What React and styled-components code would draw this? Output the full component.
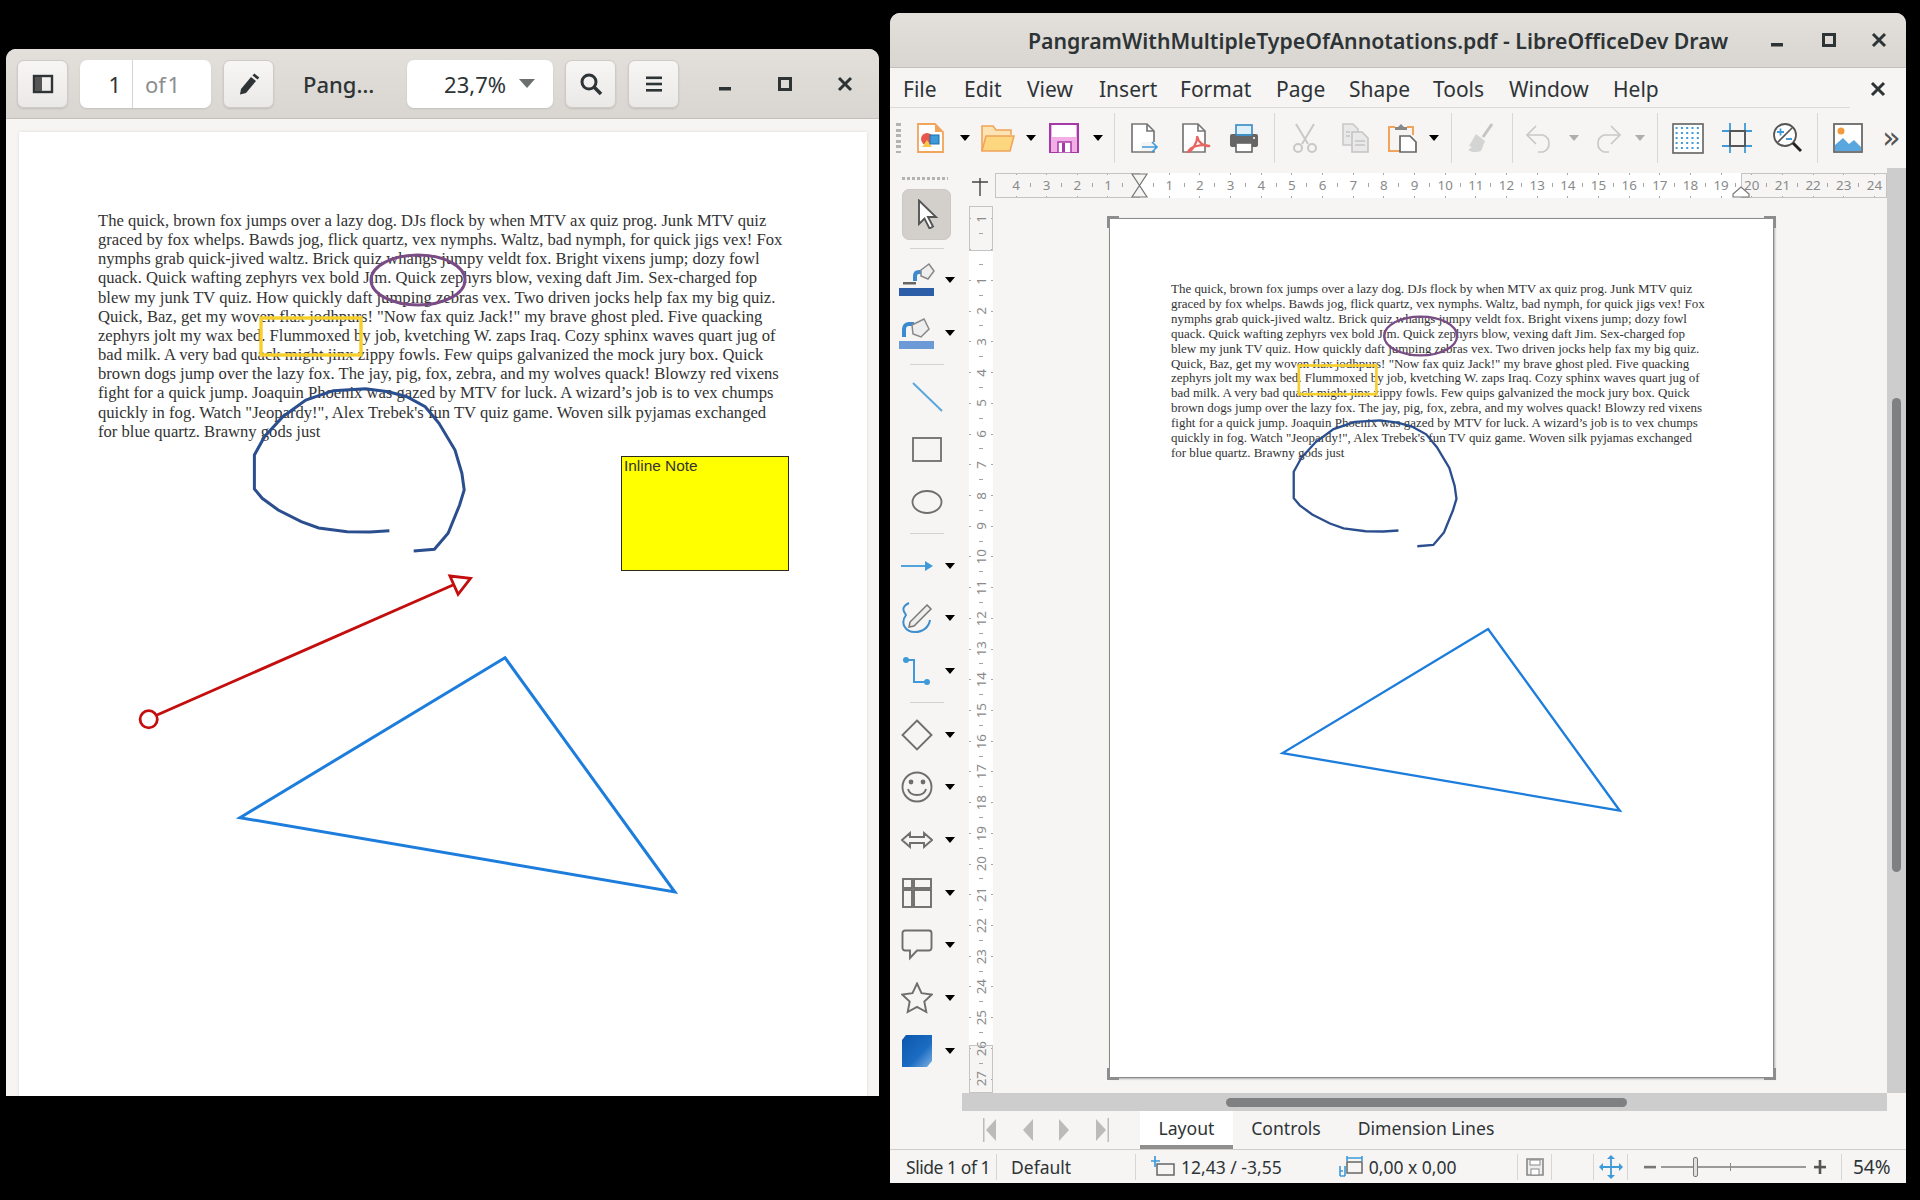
import React from "react";
import styled, { createGlobalStyle } from "styled-components";

const Global = createGlobalStyle`
  html, body { margin: 0; padding: 0; background: #000; }
  * { box-sizing: border-box; }
`;

const Desktop = styled.div`
  position: relative;
  width: 1920px;
  height: 1200px;
  background: #000;
  overflow: hidden;
  font-family: "Noto Sans", "Open Sans", sans-serif;
  color: #2e3436;
`;

/* ---------- shared window chrome ---------- */
const WindowShell = styled.section`
  position: absolute;
  display: flex;
  flex-direction: column;
  background: #f6f5f4;
  border-radius: 10px 10px 0 0;
  overflow: hidden;
`;
const PdfWindow = styled(WindowShell)`
  left: 6px;
  top: 49px;
  width: 873px;
  height: 1047px;
`;
const DrawWindow = styled(WindowShell)`
  left: 890px;
  top: 13px;
  width: 1016px;
  height: 1170px;
`;
const WinControls = styled.div`
  display: flex;
  align-items: center;
  color: #2e3436;
`;
const WinControl = styled.span`
  display: flex;
  justify-content: center;
  align-items: center;
  width: ${(p) => p.$w}px;
`;

const MinIcon = () => (
  <svg width="16" height="16" viewBox="0 0 16 16"><rect x="2" y="11" width="12" height="3.5" fill="#2e3436" /></svg>
);
const MaxIcon = () => (
  <svg width="16" height="16" viewBox="0 0 16 16"><rect x="2.5" y="2.5" width="11" height="11" fill="none" stroke="#2e3436" strokeWidth="3" /></svg>
);
const CloseIcon = () => (
  <svg width="16" height="16" viewBox="0 0 16 16"><path d="M2 2l12 12M14 2L2 14" stroke="#2e3436" strokeWidth="3" /></svg>
);

/* ---------- PDF viewer ---------- */
const PdfHeader = styled.header`
  height: 70px;
  flex: none;
  display: flex;
  align-items: center;
  padding: 0 0 0 11px;
  background: linear-gradient(#e3e0dc, #d9d6d1);
  border-bottom: 1px solid #c4bfba;
`;
const HeaderButton = styled.button`
  width: ${(p) => p.$w || 51}px;
  height: 48px;
  margin-left: ${(p) => p.$ml || 0}px;
  padding: 0;
  display: flex;
  align-items: center;
  justify-content: center;
  border: 1px solid #cfcac5;
  border-radius: 7px;
  background: linear-gradient(#f7f6f5, #ebe9e7);
  box-shadow: 0 1px 2px rgba(0, 0, 0, 0.12);
`;
const PageEntry = styled.div`
  width: 131px;
  height: 48px;
  margin-left: 12px;
  display: flex;
  border-radius: 7px;
  background: #fff;
  font-size: 22px;
  line-height: 48px;
  box-shadow: 0 1px 2px rgba(0, 0, 0, 0.1);
`;
const PageNumber = styled.span`
  width: 53px;
  padding-right: 11px;
  text-align: right;
  border-right: 1px solid #d8d4d0;
`;
const PageTotal = styled.span`
  padding-left: 12px;
  color: #8b8e8f;
  word-spacing: -4px;
`;
const DocTitle = styled.span`
  width: 133px;
  padding-left: 29px;
  font-size: 22px;
  font-weight: 500;
`;
const ZoomEntry = styled.div`
  width: 146px;
  height: 48px;
  display: flex;
  align-items: center;
  justify-content: flex-end;
  gap: 13px;
  padding-right: 18px;
  border-radius: 7px;
  background: #fff;
  font-size: 22px;
  box-shadow: 0 1px 2px rgba(0, 0, 0, 0.1);
`;
const ZoomCaret = styled.i`
  width: 0;
  height: 0;
  border-left: 8px solid transparent;
  border-right: 8px solid transparent;
  border-top: 9px solid #6b6f70;
`;
const PdfControls = styled(WinControls)`
  margin-left: 16px;
`;
const PdfBody = styled.div`
  flex: 1;
  display: flex;
  padding: 13px 12px 0 13px;
  background: #f6f5f4;
`;

const PageSheet = styled.article`
  position: relative;
  background: #fff;
  font-family: "Liberation Serif", serif;
  color: #333;
  white-space: nowrap;
`;
const PdfPage = styled(PageSheet)`
  flex: 1;
  padding: 79px 0 0 79px;
  font-size: 16.62px;
  line-height: 19.15px;
  box-shadow: 0 0 3px rgba(0, 0, 0, 0.12);
`;
const DrawPage = styled(PageSheet)`
  width: 665px;
  height: 860px;
  padding: 63px 0 0 61px;
  font-size: 12.96px;
  line-height: 14.9px;
  border: 1px solid #8a8a8a;
  box-shadow: 1px 1px 2px rgba(0, 0, 0, 0.3);
  &::after {
    content: "";
    position: absolute;
    inset: -3px;
    pointer-events: none;
    background:
      linear-gradient(#8d8d8d, #8d8d8d) 0 0 / 12px 3px no-repeat,
      linear-gradient(#8d8d8d, #8d8d8d) 0 0 / 3px 12px no-repeat,
      linear-gradient(#8d8d8d, #8d8d8d) 100% 0 / 12px 3px no-repeat,
      linear-gradient(#8d8d8d, #8d8d8d) 100% 0 / 3px 12px no-repeat,
      linear-gradient(#8d8d8d, #8d8d8d) 0 100% / 12px 3px no-repeat,
      linear-gradient(#8d8d8d, #8d8d8d) 0 100% / 3px 12px no-repeat,
      linear-gradient(#8d8d8d, #8d8d8d) 100% 100% / 12px 3px no-repeat,
      linear-gradient(#8d8d8d, #8d8d8d) 100% 100% / 3px 12px no-repeat;
  }
`;
const TextLine = styled.div``;
const Overlay = styled.svg`
  position: absolute;
  left: 0;
  top: 0;
  width: 100%;
  height: 100%;
  pointer-events: none;
`;
const InlineNote = styled.div`
  position: absolute;
  left: 602px;
  top: 324px;
  width: 168px;
  height: 115px;
  padding: 0 0 0 2px;
  background: #ffff00;
  border: 1px solid #2b2b1a;
  font-family: "Liberation Sans", sans-serif;
  font-size: 15.4px;
  line-height: 18px;
  color: #333;
`;

const LINES = [
  "The quick, brown fox jumps over a lazy dog. DJs flock by when MTV ax quiz prog. Junk MTV quiz",
  "graced by fox whelps. Bawds jog, flick quartz, vex nymphs. Waltz, bad nymph, for quick jigs vex! Fox",
  "nymphs grab quick-jived waltz. Brick quiz whangs jumpy veldt fox. Bright vixens jump; dozy fowl",
  "quack. Quick wafting zephyrs vex bold Jim. Quick zephyrs blow, vexing daft Jim. Sex-charged fop",
  "blew my junk TV quiz. How quickly daft jumping zebras vex. Two driven jocks help fax my big quiz.",
  'Quick, Baz, get my woven flax jodhpurs! "Now fax quiz Jack!" my brave ghost pled. Five quacking',
  "zephyrs jolt my wax bed. Flummoxed by job, kvetching W. zaps Iraq. Cozy sphinx waves quart jug of",
  "bad milk. A very bad quack might jinx zippy fowls. Few quips galvanized the mock jury box. Quick",
  "brown dogs jump over the lazy fox. The jay, pig, fox, zebra, and my wolves quack! Blowzy red vixens",
  "fight for a quick jump. Joaquin Phoenix was gazed by MTV for luck. A wizard’s job is to vex chumps",
  'quickly in fog. Watch "Jeopardy!", Alex Trebek\'s fun TV quiz game. Woven silk pyjamas exchanged',
  "for blue quartz. Brawny gods just",
];

const INK =
  "389.4,530.7 370,532 347.1,531.7 318.7,528 301.2,521.7 278.2,510 262.2,498.3 254.4,489 254.4,455 264.5,436.7 282.8,416.7 305.8,400 333.3,390.7 365.5,388.7 388.4,391.7 406.8,396.7 425.2,406.7 439,423.3 455,450 461.9,473.3 464.2,490 459.6,505 448.1,533.3 434.4,549.3 413.7,551";

const SharedMarks = () => (
  <g fill="none" strokeWidth="3">
    <ellipse cx="418" cy="280" rx="47" ry="25" stroke="#7a4c86" />
    <rect x="261" y="318" width="100" height="37" stroke="#f7cf2a" strokeWidth="3.4" />
    <polyline points={INK} stroke="#2b4f8e" />
    <polygon points="505,657.7 240,817.7 674.8,892" stroke="#1c7ddc" />
  </g>
);

/* ---------- header icons ---------- */
const SidebarIcon = () => (
  <svg width="22" height="22" viewBox="0 0 22 22">
    <rect x="2" y="3" width="18" height="16" fill="none" stroke="#2e3436" strokeWidth="2.4" />
    <rect x="3" y="4" width="7" height="14" fill="#555" />
  </svg>
);
const PenIcon = () => (
  <svg width="22" height="24" viewBox="0 0 22 24">
    <path d="M3 17L13 5l5 4L8 21l-6 1.5z" fill="#2e3436" />
    <path d="M14.5 3.5l1.8-2 5 4-1.8 2z" fill="#2e3436" />
  </svg>
);
const SearchIcon = () => (
  <svg width="24" height="24" viewBox="0 0 24 24" fill="none" stroke="#2e3436">
    <circle cx="10" cy="10" r="7" strokeWidth="3" />
    <path d="M15 15l7 7" strokeWidth="3.6" />
  </svg>
);
const MenuIcon = () => (
  <svg width="20" height="20" viewBox="0 0 20 20" fill="#2e3436">
    <rect x="2" y="2.5" width="16" height="2.6" />
    <rect x="2" y="8.7" width="16" height="2.6" />
    <rect x="2" y="15" width="16" height="2.6" />
  </svg>
);

/* ---------- LibreOffice window ---------- */
const DrawTitleBar = styled.header`
  height: 55px;
  flex: none;
  display: flex;
  align-items: center;
  background: linear-gradient(#e3e0dc, #d9d6d1);
  border-bottom: 1px solid #c4bfba;
`;
const DrawTitle = styled.h1`
  margin: 0 0 0 138px;
  width: 734px;
  font-size: 21.25px;
  font-weight: 600;
  white-space: nowrap;
`;
const MenuBar = styled.nav`
  position: relative;
  height: 40px;
  flex: none;
  display: flex;
  align-items: center;
  padding: 2px 0 0 13px;
  font-size: 21px;
  color: #2e3436;
  &::after {
    content: "";
    position: absolute;
    left: 0;
    bottom: 0;
    width: 960px;
    height: 1px;
    background: #dcdad8;
  }
`;
const MenuItem = styled.span`
  width: ${(p) => p.$w}px;
`;
const MenuClose = styled.span`
  margin-left: 217px;
  display: flex;
`;
const ToolBar = styled.div`
  height: 60px;
  flex: none;
  display: flex;
  align-items: center;
  padding-left: 6px;
`;
const Grip = styled.i`
  width: 5px;
  height: 30px;
  margin-right: 5px;
  background: repeating-linear-gradient(#b5b3b1 0 3px, transparent 3px 5.5px);
`;
const Slot = styled.span`
  flex: none;
  width: ${(p) => p.$w}px;
  display: flex;
  justify-content: center;
  align-items: center;
`;
const BarSep = styled.i`
  flex: none;
  width: 1px;
  height: 50px;
  margin-left: ${(p) => p.$ml || 0}px;
  background: #d9d7d5;
`;
const Caret = styled.i`
  display: block;
  width: 0;
  height: 0;
  border-left: 5.5px solid transparent;
  border-right: 5.5px solid transparent;
  border-top: 6px solid ${(p) => (p.$muted ? "#b0aeac" : "#000")};
`;
const Chevrons = styled.span`
  font-size: 30px;
  line-height: 30px;
  color: #555;
  font-family: "DejaVu Sans", sans-serif;
`;
const Workspace = styled.div`
  flex: 1;
  display: flex;
  min-height: 0;
`;
const SideTools = styled.aside`
  flex: none;
  width: 72px;
  padding-top: 20px;
  display: flex;
  flex-direction: column;
`;
const ToolRow = styled.div`
  flex: none;
  height: 52.7px;
  display: flex;
  align-items: center;
`;
const ToolIcon = styled.span`
  display: flex;
  justify-content: center;
  width: 54px;
`;
const ToolCaret = styled.span`
  display: flex;
  justify-content: center;
  width: 12px;
`;
const PlainTool = styled.div`
  flex: none;
  height: 52.7px;
  padding-left: 2px;
  display: flex;
  align-items: center;
  justify-content: center;
`;
const ActiveTool = styled.div`
  flex: none;
  width: 49px;
  height: 51px;
  margin: 0.85px 0 3px 12px;
  border-radius: 7px;
  background: #d3cfcb;
  border: 1px solid #ccc8c4;
  display: flex;
  align-items: center;
  justify-content: center;
`;
const ToolSep = styled.i`
  display: block;
  flex: none;
  height: 1px;
  width: 34px;
  margin: 5px 0 5px 20px;
  background: #d5d3d1;
`;
const GripH = styled.i`
  position: absolute;
  left: 12px;
  top: 164px;
  width: 46px;
  height: 3px;
  background: repeating-linear-gradient(90deg, #b5b3b1 0 3px, transparent 3px 5px);
`;
const MainPane = styled.div`
  flex: 1;
  min-width: 0;
  display: flex;
  flex-direction: column;
`;
const ViewArea = styled.div`
  flex: 1;
  display: flex;
  min-height: 0;
`;
const ViewColumn = styled.div`
  flex: 1;
  display: flex;
  flex-direction: column;
  min-width: 0;
`;
const RulerRow = styled.div`
  height: 30px;
  flex: none;
  display: flex;
  padding-top: 5px;
`;
const RulerCorner = styled.span`
  width: 33px;
  display: flex;
  justify-content: center;
  padding-left: 3px;
  padding-top: 5px;
`;
const HRuler = styled.div`
  position: relative;
  flex: 1;
  height: 25px;
  display: flex;
  padding-left: 5.7px;
  overflow: hidden;
  font-size: 13.4px;
  color: #8a8a8a;
  background: linear-gradient(90deg, #f6f5f4 145px, #fff 145px, #fff 746px, #f6f5f4 746px);
`;
const HMargin = styled.i`
  position: absolute;
  top: 0;
  bottom: 0;
  left: ${(p) => p.$x}px;
  width: ${(p) => p.$w}px;
  border: 1px solid #c4c4c4;
`;
const RulerCell = styled.span`
  position: relative;
  flex: 0 0 30.66px;
  text-align: center;
  line-height: 24px;
  background-image: linear-gradient(#a5a5a5, #a5a5a5), linear-gradient(#a5a5a5, #a5a5a5);
  background-size: 1px 2px;
  background-position: center top, center bottom;
  background-repeat: no-repeat;
  &::after {
    content: "";
    position: absolute;
    right: 0;
    top: 10px;
    width: 1px;
    height: 4px;
    background: #a5a5a5;
  }
`;
const RulerMarker = styled.svg`
  position: absolute;
  left: ${(p) => p.$x}px;
  top: ${(p) => p.$y}px;
`;
const CanvasRow = styled.div`
  flex: 1;
  display: flex;
  min-height: 0;
`;
const VRuler = styled.div`
  position: relative;
  flex: none;
  width: 24px;
  margin: 8px 0 0 7px;
  display: flex;
  flex-direction: column;
  overflow: hidden;
  font-size: 13.4px;
  color: #8a8a8a;
  background: linear-gradient(#f6f5f4 45px, #fff 45px, #fff 839px, #f6f5f4 839px);
`;
const VMargin = styled.i`
  position: absolute;
  left: 0;
  right: 0;
  top: ${(p) => p.$y}px;
  height: ${(p) => p.$h}px;
  border: 1px solid #c4c4c4;
`;
const VCell = styled.span`
  position: relative;
  flex: 0 0 30.72px;
  display: flex;
  align-items: center;
  justify-content: center;
  &:first-child {
    margin-top: -2.4px;
  }
  background-image: linear-gradient(#a5a5a5, #a5a5a5), linear-gradient(#a5a5a5, #a5a5a5);
  background-size: 2px 1px;
  background-position: left center, right center;
  background-repeat: no-repeat;
  &::after {
    content: "";
    position: absolute;
    bottom: 0;
    left: 10px;
    width: 4px;
    height: 1px;
    background: #a5a5a5;
  }
`;
const VDigit = styled.span`
  writing-mode: vertical-rl;
  transform: rotate(180deg);
  line-height: 22px;
`;
const Canvas = styled.main`
  flex: 1;
  min-width: 0;
  padding: 20px 0 0 116px;
  overflow: hidden;
`;
const VScroll = styled.div`
  position: relative;
  flex: none;
  width: 19px;
  background: #cdcdcd;
`;
const VThumb = styled.i`
  position: absolute;
  left: 5px;
  top: 230px;
  width: 9px;
  height: 474px;
  border-radius: 5px;
  background: #7e8082;
`;
const HScroll = styled.div`
  position: relative;
  flex: none;
  height: 18px;
  margin-right: 19px;
  background: #cdcdcd;
`;
const HThumb = styled.i`
  position: absolute;
  left: 264px;
  top: 5px;
  width: 401px;
  height: 9px;
  border-radius: 5px;
  background: #7e8082;
`;
const TabRow = styled.div`
  height: 38px;
  flex: none;
  display: flex;
  align-items: stretch;
  font-size: 17.6px;
`;
const TabNav = styled.div`
  width: 178px;
  display: flex;
  align-items: center;
  padding-left: 21px;
  gap: 22px;
`;
const Tab = styled.span`
  display: flex;
  align-items: center;
  justify-content: center;
  width: ${(p) => p.$w}px;
  white-space: nowrap;
  background: ${(p) => (p.$active ? "#fff" : "transparent")};
  border-bottom: 4px solid ${(p) => (p.$active ? "#8f8f8f" : "transparent")};
`;
const StatusBar = styled.footer`
  height: 34px;
  flex: none;
  display: flex;
  align-items: center;
  border-top: 1px solid #cfcdcb;
  font-size: 17.5px;
`;
const StatusCell = styled.span`
  flex: none;
  width: ${(p) => p.$w}px;
  height: 26px;
  display: flex;
  align-items: center;
  gap: ${(p) => p.$gap || 0}px;
  justify-content: ${(p) => (p.$center ? "center" : "flex-start")};
  padding-left: ${(p) => p.$pl || 0}px;
  border-left: ${(p) => (p.$first ? "none" : "1px solid #d8d6d4")};
  white-space: nowrap;
`;
const SlideLabel = styled.span`
  letter-spacing: -0.45px;
`;
const SizeGap = styled.span`
  display: inline-block;
  width: 45px;
`;
const PercentText = styled.span`
  font-size: 19px;
`;
const SliderBox = styled.span`
  position: relative;
  display: flex;
  align-items: center;
  width: 145px;
  height: 20px;
  margin: 0 7px 0 4px;
`;
const SliderTrack = styled.i`
  width: 100%;
  height: 2px;
  background: #9a9a9a;
`;
const SliderThumb = styled.i`
  position: absolute;
  left: 32px;
  top: 0;
  width: 5px;
  height: 20px;
  border: 1px solid #7b7b7b;
  border-radius: 2px;
  background: #e2e0de;
`;
const SliderTick = styled.i`
  position: absolute;
  left: 69px;
  top: 6px;
  width: 1px;
  height: 8px;
  background: #8a8a8a;
`;

/* ---------- office icons ---------- */
const Ico = ({ s = 30, vb = "0 0 30 30", children }) => (
  <svg width={s} height={s} viewBox={vb}>{children}</svg>
);

const NewDraw = () => (
  <Ico>
    <path d="M2 1h17l8 8v20H2z" fill="#fff" stroke="#f1a45a" strokeWidth="1.8" />
    <path d="M19 1l8 8h-8z" fill="#f1a45a" />
    <circle cx="11" cy="16" r="6" fill="#e8574a" />
    <path d="M6 24l5-7 5 7z" fill="#f7c64b" />
    <rect x="14" y="12" width="9" height="9" fill="#3c9ad6" stroke="#1f6fb0" />
  </Ico>
);
const OpenFolder = () => (
  <Ico vb="0 0 34 30" s={34}>
    <path d="M1 28V3h11l3 4h15v5" fill="#fbe3b4" stroke="#f1a45a" strokeWidth="1.6" />
    <path d="M1 28l4-15h28l-4 15z" fill="#fcd77f" stroke="#f1a45a" strokeWidth="1.6" />
  </Ico>
);
const SaveDisk = () => (
  <Ico>
    <path d="M1 1h28v29H1z" fill="#f3aee6" stroke="#a33aa8" strokeWidth="2" />
    <rect x="3" y="2" width="24" height="12" fill="#fff" />
    <rect x="9" y="19" width="13" height="11" fill="#fff" stroke="#a33aa8" strokeWidth="1.5" />
    <rect x="13" y="20" width="3" height="9" fill="#a33aa8" />
  </Ico>
);
const DocOutline = () => (
  <>
    <path d="M2 1h15l7 7v21H2z" fill="#fff" stroke="#777" strokeWidth="1.7" />
    <path d="M17 1v7h7" fill="none" stroke="#777" strokeWidth="1.7" />
  </>
);
const ExportDoc = () => (
  <Ico>
    <DocOutline />
    <rect x="11" y="19" width="18" height="9" fill="#f6f5f4" />
    <path d="M12 24h15m-5-5l5 5-5 5" fill="none" stroke="#3f9ad9" strokeWidth="1.6" />
  </Ico>
);
const PdfDoc = () => (
  <Ico>
    <DocOutline />
    <path d="M16 13c1 6-5 15-9 16 2-6 14-8 22-6-6 1-12-4-13-10z" fill="none" stroke="#e8655f" strokeWidth="2.2" />
  </Ico>
);
const Printer = () => (
  <Ico>
    <rect x="7" y="2" width="16" height="12" fill="#dff0fb" stroke="#3f8fc8" strokeWidth="1.7" />
    <rect x="1" y="11" width="28" height="13" rx="2" fill="#666" />
    <rect x="7" y="11" width="16" height="2" fill="#3f8fc8" />
    <rect x="7" y="20" width="16" height="9" fill="#fff" stroke="#666" strokeWidth="1.6" />
    <rect x="24" y="14" width="2" height="2" fill="#ddd" />
  </Ico>
);
const Scissors = () => (
  <Ico>
    <g fill="none" stroke="#c8c8c8" strokeWidth="2">
      <path d="M6 1l12 20M24 1L12 21" />
      <circle cx="8" cy="25" r="4" />
      <circle cx="22" cy="25" r="4" />
    </g>
  </Ico>
);
const CopyDocs = () => (
  <Ico>
    <path d="M3 1h10l5 5v16H3z" fill="#e9e9e9" stroke="#c8c8c8" strokeWidth="1.6" />
    <path d="M12 9h10l6 6v14H12z" fill="#e9e9e9" stroke="#c4c4c4" strokeWidth="1.6" />
    <path d="M15 18h10M15 22h10M6 9h4M6 13h4" stroke="#c4c4c4" strokeWidth="1.5" />
  </Ico>
);
const PasteClip = () => (
  <Ico>
    <path d="M8 4H2v24h12M20 4h6v8" fill="none" stroke="#f1a45a" strokeWidth="2" />
    <path d="M8 7V4h3l3-3 3 3h3v3z" fill="#888" />
    <path d="M13 13h10l6 6v10H13z" fill="#fff" stroke="#666" strokeWidth="1.7" />
  </Ico>
);
const Broom = () => (
  <Ico>
    <path d="M27 1l-9 13" stroke="#c4c4c4" strokeWidth="3" fill="none" />
    <path d="M11 11l9 7-4 10c-6 2-10 1-13-1l4-3-3-1z" fill="#d4d4d4" />
  </Ico>
);
const UndoArrow = ({ flip }) => (
  <Ico>
    <g transform={flip ? "translate(30 0) scale(-1 1)" : undefined} fill="none" stroke="#c8c8c8" strokeWidth="1.7">
      <path d="M11 3L2 12l9 9" />
      <path d="M2 12h16a9 9 0 0 1 0 17h-5" />
    </g>
  </Ico>
);
const GridIcon = () => {
  const dots = [];
  for (let y = 0; y < 5; y++) for (let x = 0; x < 5; x++) dots.push(<rect key={`${x}${y}`} x={3.6 + x * 5.3} y={4 + y * 5} width="2" height="2" fill="#3f9ad9" />);
  return (
    <Ico s={32} vb="0 0 32 30">
      <rect x="1" y="1" width="30" height="29" fill="#fff" stroke="#6a6a6a" strokeWidth="1.7" />
      {dots}
    </Ico>
  );
};
const SnapIcon = () => (
  <Ico>
    <path d="M8 0v30M23 0v30M0 8h30M0 23h30" stroke="#3f9ad9" strokeWidth="1.8" />
    <path d="M8 8h15v15H8z" fill="none" stroke="#555" strokeWidth="1.8" />
  </Ico>
);
const ZoomObj = () => (
  <Ico>
    <circle cx="13" cy="12" r="11" fill="#fff" stroke="#555" strokeWidth="1.8" />
    <path d="M5 20L21 4" stroke="#555" strokeWidth="1.6" />
    <path d="M5 9h7M8.5 5.5v7M14 16h6" stroke="#3f9ad9" strokeWidth="1.8" />
    <path d="M21 20l8 8" stroke="#222" strokeWidth="3" />
  </Ico>
);
const ImageIcon = () => (
  <Ico>
    <rect x="1" y="1" width="28" height="28" fill="#fff" stroke="#6a6a6a" strokeWidth="1.8" />
    <circle cx="8" cy="8" r="3.5" fill="#f19a3e" />
    <path d="M2 28v-6l8-7 6 6 5-4 7 7v4z" fill="#5aa7df" />
  </Ico>
);

const SelectArrow = () => (
  <Ico>
    <path d="M7 1.5V25l5.5-5.5 5 10 3.5-2-5-9.5H24z" fill="#fff" stroke="#555" strokeWidth="1.9" />
  </Ico>
);
const LineColor = () => (
  <Ico s={36} vb="0 0 36 36">
    <rect x="0" y="26" width="35" height="8" fill="#2b5ea7" />
    <rect x="4" y="20" width="13" height="2.5" fill="#666" />
    <path d="M16 19v-5c0-2 1-4 4-4h5" fill="none" stroke="#3b8ad0" strokeWidth="4" />
    <path d="M22 8l8-6 5 7-6 8-7-3z" fill="#eee" stroke="#888" strokeWidth="1.5" />
  </Ico>
);
const FillColor = () => (
  <Ico s={36} vb="0 0 36 36">
    <rect x="0" y="26" width="35" height="8" fill="#6c9ad6" />
    <path d="M5 22v-8c0-3 2-5 5-5h5" fill="none" stroke="#3b8ad0" strokeWidth="4" />
    <path d="M13 10l12-6 5 10-8 8-8-3z" fill="#eee" stroke="#888" strokeWidth="1.5" />
  </Ico>
);
const LineTool = () => (
  <Ico s={32} vb="0 0 32 30">
    <path d="M2 1l29 28" stroke="#5aa7dc" strokeWidth="2" />
  </Ico>
);
const RectTool = () => (
  <Ico s={32} vb="0 0 32 30">
    <rect x="2" y="4" width="28" height="23" fill="none" stroke="#6e6e6e" strokeWidth="1.8" />
  </Ico>
);
const EllipseTool = () => (
  <Ico s={32} vb="0 0 32 30">
    <ellipse cx="16" cy="15" rx="14.5" ry="11" fill="none" stroke="#6e6e6e" strokeWidth="1.8" />
  </Ico>
);
const ArrowTool = () => (
  <svg width="32" height="14" viewBox="0 0 32 14">
    <path d="M0 7h26" stroke="#3f9ad9" strokeWidth="1.8" />
    <path d="M24 2l8 5-8 5z" fill="#3f9ad9" />
  </svg>
);
const CurveTool = () => (
  <Ico s={32} vb="0 0 32 32">
    <path d="M8 1c-8 4-6 8-3 12-6 8-1 17 9 17 8 0 14-5 15-12" fill="none" stroke="#3f8fcf" strokeWidth="2" />
    <path d="M26 3l4 4-17 17-5 1 1-5z" fill="#eee" stroke="#777" strokeWidth="1.5" />
  </Ico>
);
const ConnectorTool = () => (
  <Ico>
    <path d="M4 4h8v22h13" fill="none" stroke="#3f9ad9" strokeWidth="2" />
    <circle cx="4" cy="4" r="3" fill="#3f9ad9" />
    <circle cx="25" cy="26" r="3" fill="#3f9ad9" />
  </Ico>
);
const DiamondTool = () => (
  <Ico s={32} vb="0 0 32 32">
    <path d="M16 1.5L30.5 16 16 30.5 1.5 16z" fill="none" stroke="#6e6e6e" strokeWidth="1.9" />
  </Ico>
);
const SmileTool = () => (
  <Ico s={32} vb="0 0 32 32">
    <circle cx="16" cy="16" r="14.5" fill="none" stroke="#6e6e6e" strokeWidth="1.9" />
    <circle cx="10" cy="11" r="2.4" fill="#6e6e6e" />
    <circle cx="22" cy="11" r="2.4" fill="#6e6e6e" />
    <path d="M7 18c2 8 16 8 18 0" fill="none" stroke="#6e6e6e" strokeWidth="1.9" />
  </Ico>
);
const DoubleArrowTool = () => (
  <svg width="32" height="18" viewBox="0 0 32 18">
    <path d="M1 9l8-7v4h14V2l8 7-8 7v-4H9v4z" fill="none" stroke="#6e6e6e" strokeWidth="1.9" />
  </svg>
);
const FlowTool = () => (
  <Ico s={32} vb="0 0 32 32">
    <g fill="none" stroke="#6e6e6e" strokeWidth="1.9">
      <rect x="2" y="2" width="9" height="9" />
      <rect x="13" y="2" width="17" height="9" />
      <rect x="2" y="13" width="9" height="17" />
      <rect x="13" y="13" width="17" height="17" />
    </g>
  </Ico>
);
const CalloutTool = () => (
  <Ico s={32} vb="0 0 32 32">
    <path d="M4 1.5h24a2.5 2.5 0 0 1 2.5 2.5v15a2.5 2.5 0 0 1-2.5 2.5H16L9 29v-7.5H4A2.5 2.5 0 0 1 1.5 19V4A2.5 2.5 0 0 1 4 1.5z" fill="none" stroke="#6e6e6e" strokeWidth="1.9" />
  </Ico>
);
const StarTool = () => (
  <Ico s={32} vb="0 0 32 32">
    <path d="M16 1.5l4.5 9.7 10.3 1.3-7.5 7 2 10.5-9.3-5.2-9.3 5.2 2-10.5-7.5-7 10.3-1.3z" fill="none" stroke="#6e6e6e" strokeWidth="1.9" />
  </Ico>
);
const CubeTool = () => (
  <Ico s={32} vb="0 0 32 32">
    <defs>
      <linearGradient id="cubeFill" x1="0" y1="0" x2="1" y2="1">
        <stop offset="0" stopColor="#0d57ad" />
        <stop offset="0.6" stopColor="#1b6cc2" />
        <stop offset="1" stopColor="#7fb2e2" />
      </linearGradient>
    </defs>
    <path d="M5 0h26v26l-5 6H1V5z" fill="url(#cubeFill)" />
  </Ico>
);
const TabArrow = ({ dir, bar }) => (
  <svg width="15" height="24" viewBox="0 0 15 24">
    <g transform={dir === "right" ? "translate(15 0) scale(-1 1)" : undefined}>
      {bar && <rect x="0" y="0" width="1.5" height="24" fill="#bdbbb9" />}
      <path d="M13 1L3 12l10 11z" fill="#bdbbb9" />
    </g>
  </svg>
);
const PosIcon = () => (
  <Ico s={24} vb="0 0 24 24">
    <rect x="6" y="9" width="17" height="11" fill="none" stroke="#666" strokeWidth="1.5" />
    <path d="M4 1v11M0 6h9" stroke="#3f9ad9" strokeWidth="1.7" />
  </Ico>
);
const DimIcon = () => (
  <Ico s={24} vb="0 0 24 24">
    <rect x="8" y="7" width="15" height="11" fill="none" stroke="#666" strokeWidth="1.5" />
    <path d="M8 3h15M8 1v5M23 1v5M1 11v10M4 16H1M6 11v10M1 21h5" fill="none" stroke="#3f9ad9" strokeWidth="1.6" />
  </Ico>
);
const DiskIcon = () => (
  <Ico s={20} vb="0 0 20 20">
    <path d="M2 2h16v16H2z" fill="#eee" stroke="#888" strokeWidth="1.6" />
    <rect x="5" y="3" width="10" height="5" fill="#fff" stroke="#888" />
    <rect x="6" y="12" width="8" height="6" fill="#fff" stroke="#888" />
  </Ico>
);
const FitIcon = () => (
  <Ico s={24} vb="0 0 24 24">
    <path d="M12 3v18M3 12h18" stroke="#3f9ad9" strokeWidth="1.8" />
    <path d="M12 0l4 4H8zM12 24l4-4H8zM0 12l4-4v8zM24 12l-4-4v8z" fill="#3f9ad9" />
  </Ico>
);
const PlusMinus = ({ plus }) => (
  <Ico s={14} vb="0 0 14 14">
    <rect x="1" y="5.8" width="12" height="2.6" fill={plus ? "#555" : "#777"} />
    {plus && <rect x="5.7" y="0" width="2.6" height="14" fill="#555" />}
  </Ico>
);
const CornerCross = () => (
  <svg width="16" height="18" viewBox="0 0 16 18">
    <path d="M0 4h16M8 0v18" stroke="#444" strokeWidth="1.4" />
  </svg>
);

const TOP_NUMS = [];
for (let n = -4; n <= 24; n++) TOP_NUMS.push(n);
const SIDE_NUMS = [];
for (let n = -1; n <= 27; n++) SIDE_NUMS.push(n);

const MENUS = [
  ["File", 61],
  ["Edit", 63],
  ["View", 72],
  ["Insert", 81],
  ["Format", 96],
  ["Page", 73],
  ["Shape", 84],
  ["Tools", 76],
  ["Window", 104],
];

const Tool = ({ icon }) => (
  <ToolRow>
    <ToolIcon>{icon}</ToolIcon>
    <ToolCaret><Caret /></ToolCaret>
  </ToolRow>
);

export default function App() {
  return (
    <Desktop>
      <Global />
      <PdfWindow>
        <PdfHeader>
          <HeaderButton><SidebarIcon /></HeaderButton>
          <PageEntry>
            <PageNumber>1</PageNumber>
            <PageTotal>of 1</PageTotal>
          </PageEntry>
          <HeaderButton $ml={12}><PenIcon /></HeaderButton>
          <DocTitle>Pang…</DocTitle>
          <ZoomEntry>23,7%<ZoomCaret /></ZoomEntry>
          <HeaderButton $ml={12}><SearchIcon /></HeaderButton>
          <HeaderButton $ml={12}><MenuIcon /></HeaderButton>
          <PdfControls>
            <WinControl $w={60}><MinIcon /></WinControl>
            <WinControl $w={60}><MaxIcon /></WinControl>
            <WinControl $w={60}><CloseIcon /></WinControl>
          </PdfControls>
        </PdfHeader>
        <PdfBody>
          <PdfPage>
            {LINES.map((l) => <TextLine key={l}>{l}</TextLine>)}
            <Overlay viewBox="19 132 848 964" preserveAspectRatio="xMinYMin meet">
              <SharedMarks />
              <g fill="none" stroke="#c40d0d" strokeWidth="2.8">
                <circle cx="148.7" cy="719.3" r="8.6" />
                <path d="M157 715L453 585" />
                <polygon points="449.9,576 470.5,578.3 458.1,594.3" />
              </g>
            </Overlay>
            <InlineNote>Inline Note</InlineNote>
          </PdfPage>
        </PdfBody>
      </PdfWindow>

      <DrawWindow>
        <DrawTitleBar>
          <DrawTitle>PangramWithMultipleTypeOfAnnotations.pdf - LibreOfficeDev Draw</DrawTitle>
          <WinControls>
            <WinControl $w={30}><MinIcon /></WinControl>
            <WinControl $w={74}><MaxIcon /></WinControl>
            <WinControl $w={26}><CloseIcon /></WinControl>
          </WinControls>
        </DrawTitleBar>
        <MenuBar>
          {MENUS.map(([m, w]) => <MenuItem key={m} $w={w}>{m}</MenuItem>)}
          <MenuItem $w={40}>Help</MenuItem>
          <MenuClose><CloseIcon /></MenuClose>
        </MenuBar>
        <ToolBar>
          <Grip />
          <Slot $w={50}><NewDraw /></Slot>
          <Slot $w={18}><Caret /></Slot>
          <Slot $w={48}><OpenFolder /></Slot>
          <Slot $w={18}><Caret /></Slot>
          <Slot $w={48}><SaveDisk /></Slot>
          <Slot $w={20}><Caret /></Slot>
          <BarSep $ml={6} />
          <Slot $w={60}><ExportDoc /></Slot>
          <Slot $w={42}><PdfDoc /></Slot>
          <Slot $w={54}><Printer /></Slot>
          <BarSep $ml={3} />
          <Slot $w={60}><Scissors /></Slot>
          <Slot $w={40}><CopyDocs /></Slot>
          <Slot $w={54}><PasteClip /></Slot>
          <Slot $w={10}><Caret /></Slot>
          <BarSep $ml={12} />
          <Slot $w={56}><Broom /></Slot>
          <BarSep $ml={4} />
          <Slot $w={54}><UndoArrow /></Slot>
          <Slot $w={14}><Caret $muted /></Slot>
          <Slot $w={52}><UndoArrow flip /></Slot>
          <Slot $w={14}><Caret $muted /></Slot>
          <BarSep $ml={10} />
          <Slot $w={60}><GridIcon /></Slot>
          <Slot $w={38}><SnapIcon /></Slot>
          <Slot $w={61}><ZoomObj /></Slot>
          <BarSep />
          <Slot $w={60}><ImageIcon /></Slot>
          <Slot $w={27}><Chevrons>»</Chevrons></Slot>
        </ToolBar>
        <Workspace>
          <GripH />
          <SideTools>
            <ActiveTool><SelectArrow /></ActiveTool>
            <ToolSep />
            <Tool icon={<LineColor />} />
            <Tool icon={<FillColor />} />
            <ToolSep />
            <PlainTool><LineTool /></PlainTool>
            <PlainTool><RectTool /></PlainTool>
            <PlainTool><EllipseTool /></PlainTool>
            <ToolSep />
            <Tool icon={<ArrowTool />} />
            <Tool icon={<CurveTool />} />
            <Tool icon={<ConnectorTool />} />
            <ToolSep />
            <Tool icon={<DiamondTool />} />
            <Tool icon={<SmileTool />} />
            <Tool icon={<DoubleArrowTool />} />
            <Tool icon={<FlowTool />} />
            <Tool icon={<CalloutTool />} />
            <Tool icon={<StarTool />} />
            <Tool icon={<CubeTool />} />
          </SideTools>
          <MainPane>
            <ViewArea>
              <ViewColumn>
                <RulerRow>
                  <RulerCorner><CornerCross /></RulerCorner>
                  <HRuler>
                    {TOP_NUMS.map((n) => <RulerCell key={n}>{n === 0 ? "" : Math.abs(n)}</RulerCell>)}
                    <HMargin $x={0} $w={145} />
                    <HMargin $x={746} $w={146} />
                    <RulerMarker $x={135} $y={0} width="20" height="25" viewBox="0 0 20 25">
                      <path d="M2 1h15L2 24h15z" fill="#f6f5f4" stroke="#777" strokeWidth="1.2" />
                    </RulerMarker>
                    <RulerMarker $x={737} $y={13} width="18" height="12" viewBox="0 0 18 12">
                      <path d="M1 11h16V8L9 1 1 8z" fill="#fff" stroke="#777" strokeWidth="1.2" />
                    </RulerMarker>
                  </HRuler>
                </RulerRow>
                <CanvasRow>
                  <VRuler>
                    {SIDE_NUMS.map((n) => (
                      <VCell key={n}><VDigit>{n === 0 ? "" : Math.abs(n)}</VDigit></VCell>
                    ))}
                    <VMargin $y={0} $h={45} />
                    <VMargin $y={839} $h={48} />
                  </VRuler>
                  <Canvas>
                    <DrawPage>
                      {LINES.map((l) => <TextLine key={l}>{l}</TextLine>)}
                      <Overlay viewBox="1109 218 665 860" preserveAspectRatio="xMinYMin meet">
                        <g transform={`matrix(.778 0 0 .778 ${1171.6 - 98 * 0.778} ${289 - 220.4 * 0.778})`}>
                          <SharedMarks />
                        </g>
                      </Overlay>
                    </DrawPage>
                  </Canvas>
                </CanvasRow>
              </ViewColumn>
              <VScroll><VThumb /></VScroll>
            </ViewArea>
            <HScroll><HThumb /></HScroll>
            <TabRow>
              <TabNav>
                <TabArrow bar />
                <TabArrow />
                <TabArrow dir="right" />
                <TabArrow dir="right" bar />
              </TabNav>
              <Tab $w={93} $active>Layout</Tab>
              <Tab $w={106}>Controls</Tab>
              <Tab $w={174}>Dimension Lines</Tab>
            </TabRow>
          </MainPane>
        </Workspace>
        <StatusBar>
          <StatusCell $first $w={106} $pl={16}><SlideLabel>Slide 1 of 1</SlideLabel></StatusCell>
          <StatusCell $w={139} $pl={14}>Default</StatusCell>
          <StatusCell $w={382} $pl={15} $gap={6}>
            <PosIcon />12,43 / -3,55<SizeGap /><DimIcon />0,00 x 0,00
          </StatusCell>
          <StatusCell $w={34} $center><DiskIcon /></StatusCell>
          <StatusCell $w={42} />
          <StatusCell $w={34} $center><FitIcon /></StatusCell>
          <StatusCell $w={214} $pl={15}>
            <PlusMinus />
            <SliderBox>
              <SliderTrack />
              <SliderThumb />
              <SliderTick />
            </SliderBox>
            <PlusMinus plus />
          </StatusCell>
          <StatusCell $w={65} $pl={11}><PercentText>54%</PercentText></StatusCell>
        </StatusBar>
      </DrawWindow>
    </Desktop>
  );
}
